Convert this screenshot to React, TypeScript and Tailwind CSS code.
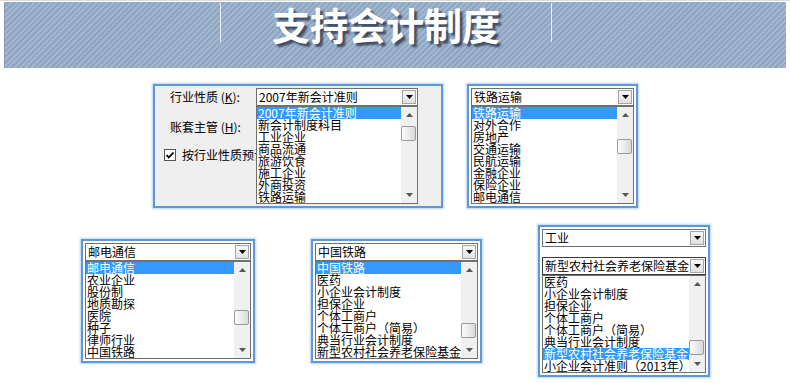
import clsx from 'clsx'

const LIST_1 = ['2007年新会计准则', '新会计制度科目', '工业企业', '商品流通', '旅游饮食', '施工企业', '外商投资', '铁路运输']
const LIST_2 = ['铁路运输', '对外合作', '房地产', '交通运输', '民航运输', '金融企业', '保险企业', '邮电通信']
const LIST_3 = ['邮电通信', '农业企业', '股份制', '地质勘探', '医院', '种子', '律师行业', '中国铁路']
const LIST_4 = ['中国铁路', '医药', '小企业会计制度', '担保企业', '个体工商户', '个体工商户（简易）', '典当行业会计制度', '新型农村社会养老保险基金']
const LIST_5 = ['医药', '小企业会计制度', '担保企业', '个体工商户', '个体工商户（简易）', '典当行业会计制度', '新型农村社会养老保险基金', '小企业会计准则（2013年）']

function Arrow({ up, className }: { up?: boolean; className?: string }) {
  return (
    <svg width="7" height="4" viewBox="0 0 7 4" className={className}>
      <path d={up ? 'M0 4h7L3.5 0z' : 'M0 0h7L3.5 4z'} fill="currentColor" />
    </svg>
  )
}

function ComboBox({ value, dark }: { value: string; dark?: boolean }) {
  return (
    <div className={clsx('flex h-[18px] border bg-white', dark ? 'border-[#3a3a3a]' : 'border-[#707070]')}>
      <div className="flex-1 overflow-hidden whitespace-nowrap pl-[2px] text-[12px] leading-[16px] text-black">{value}</div>
      <div className="m-[1px] flex w-[14px] shrink-0 items-center justify-center border border-[#a5a5a5] bg-[linear-gradient(#f8f8f8,#e1e1e1)]">
        <Arrow className="text-black" />
      </div>
    </div>
  )
}

function ScrollBar({ thumb }: { thumb: string }) {
  return (
    <div className="flex w-[16px] shrink-0 flex-col bg-[#f0f0f0]">
      <div className="flex h-[16px] items-center justify-center text-[#555]">
        <Arrow up />
      </div>
      <div className="flex-1">
        <div className={clsx('h-[15px] w-[15px] rounded-[2px] border border-[#999] bg-[linear-gradient(90deg,#fcfcfc,#dadada)]', thumb)} />
      </div>
      <div className="flex h-[16px] items-center justify-center text-[#555]">
        <Arrow />
      </div>
    </div>
  )
}

function ListBox({ items, sel, thumb }: { items: string[]; sel: number; thumb: string }) {
  return (
    <div className="flex h-[98px] border border-[#707070] bg-white">
      <div className="flex-1 overflow-hidden">
        {items.map((t, i) => (
          <div
            key={t}
            className={clsx(
              'h-[12px] whitespace-nowrap pl-[1px] text-[12px] leading-[12px]',
              i === sel ? 'bg-[#3399ff] text-white' : 'text-black'
            )}
          >
            {t}
          </div>
        ))}
      </div>
      <ScrollBar thumb={thumb} />
    </div>
  )
}

function Checkbox() {
  return (
    <div className="flex h-[12px] w-[12px] shrink-0 items-center justify-center border border-[#555] bg-white">
      <svg width="10" height="10" viewBox="0 0 10 10">
        <path d="M1.5 5l2.3 2.4L8.5 2.5" fill="none" stroke="#000" strokeWidth="1.8" />
      </svg>
    </div>
  )
}

const panel = 'border-2 border-[#5b99d8] shadow-[0_0_2px_1px_#b9d5f1]'

export default function App() {
  return (
    <div className="h-[383px] w-[790px] overflow-hidden border-t border-[#dcdcdc] bg-white font-[family-name:'Noto_Sans_CJK_SC',sans-serif]">
      <div className="mx-[4px] mt-[1px] flex h-[66px] border-l border-[#8a9bb3] bg-[repeating-linear-gradient(135deg,#a3b6cf_0px,#a3b6cf_2px,#8fa6c3_2px,#8fa6c3_4px)]">
        <div className="w-[215px]" />
        <div className="mt-[1px] h-[39px] w-px bg-white/80" />
        <div className="flex w-[330px] justify-center">
          <span className="text-[38px] font-bold leading-[44px] text-white [text-shadow:3px_3px_2px_rgba(35,45,65,0.75)]">
            支持会计制度
          </span>
        </div>
        <div className="mt-[1px] h-[39px] w-px bg-white/80" />
      </div>

      <div className="mt-[16px] flex items-start gap-[24px] pl-[153px]">
        <div className={clsx(panel, 'flex w-[290px] bg-[#efefef] py-[2px]')}>
          <div className="w-[101px] shrink-0 text-[12px] text-black">
            <div className="flex h-[18px] items-center whitespace-nowrap pl-[15px]">
              行业性质 (<u>K</u>):
            </div>
            <div className="mt-[12px] flex h-[18px] items-center whitespace-nowrap pl-[15px]">
              账套主管 (<u>H</u>):
            </div>
            <div className="mt-[10px] flex h-[18px] items-center gap-[6px] whitespace-nowrap pl-[9px]">
              <Checkbox />
              按行业性质预设科目
            </div>
          </div>
          <div className="relative z-10 w-[162px] shrink-0">
            <ComboBox value="2007年新会计准则" />
            <ListBox items={LIST_1} sel={0} thumb="mt-[3px]" />
          </div>
        </div>

        <div className={clsx(panel, 'w-[171px] bg-white p-[2px]')}>
          <ComboBox value="铁路运输" />
          <ListBox items={LIST_2} sel={0} thumb="mt-[16px]" />
        </div>
      </div>

      <div className="flex items-start gap-[56px] pl-[81px]">
        <div className={clsx(panel, 'mt-[31px] w-[174px] bg-white p-[2px]')}>
          <ComboBox value="邮电通信" />
          <ListBox items={LIST_3} sel={0} thumb="mt-[32px]" />
        </div>

        <div className={clsx(panel, 'mt-[31px] w-[171px] bg-white p-[2px]')}>
          <ComboBox value="中国铁路" />
          <ListBox items={LIST_4} sel={0} thumb="mt-[45px]" />
        </div>

        <div className={clsx(panel, 'mt-[17px] w-[172px] bg-white p-[2px]')}>
          <ComboBox value="工业" />
          <div className="mt-[10px]">
            <ComboBox value="新型农村社会养老保险基金" dark />
          </div>
          <ListBox items={LIST_5} sel={6} thumb="mt-[48px]" />
        </div>
      </div>
    </div>
  )
}
